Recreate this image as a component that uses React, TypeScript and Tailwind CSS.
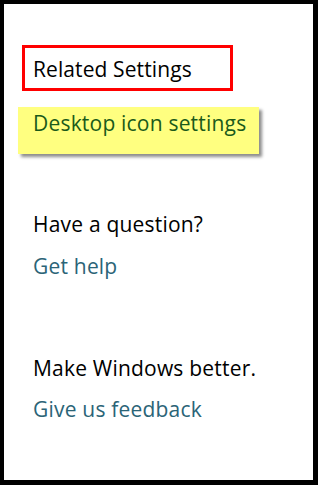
export default function App() {
  const font = { fontFamily: '"Open Sans", "Noto Sans", sans-serif' };
  return (
    <div
      className="w-[318px] h-[485px] bg-white border-black border-t-4 border-l-4 border-r-[5px] border-b-[5px] box-border overflow-hidden"
      style={font}
    >
      <div className="pt-[41px] pl-[18px]">
        <div className="w-[211px] h-[46px] border-[3px] border-[#ff0000] flex items-center pl-[8px] pt-[2px]">
          <span className="text-[21px] leading-none tracking-[0.1px] text-black">Related Settings</span>
        </div>
        <div className="mt-[16px] -ml-[4px] w-[241px] h-[47px] bg-[#ffff80] shadow-[3px_3px_3px_rgba(0,0,0,0.45)] pl-[15px] pt-[6px]">
          <span className="text-[21px] leading-none tracking-[0.2px] text-[#1a5a1a]">Desktop icon settings</span>
        </div>
        <div className="mt-[60px] pl-[11px] text-[21px] leading-none tracking-[0.2px] text-black">Have a question?</div>
        <div className="mt-[21px] pl-[11px] text-[21px] leading-none tracking-[0.2px] text-[#2b6477]">Get help</div>
        <div className="mt-[81px] pl-[11px] text-[21px] leading-none tracking-[0.2px] text-black">Make Windows better.</div>
        <div className="mt-[20px] pl-[11px] text-[21px] leading-none tracking-[0.2px] text-[#2b6477]">Give us feedback</div>
      </div>
    </div>
  );
}
